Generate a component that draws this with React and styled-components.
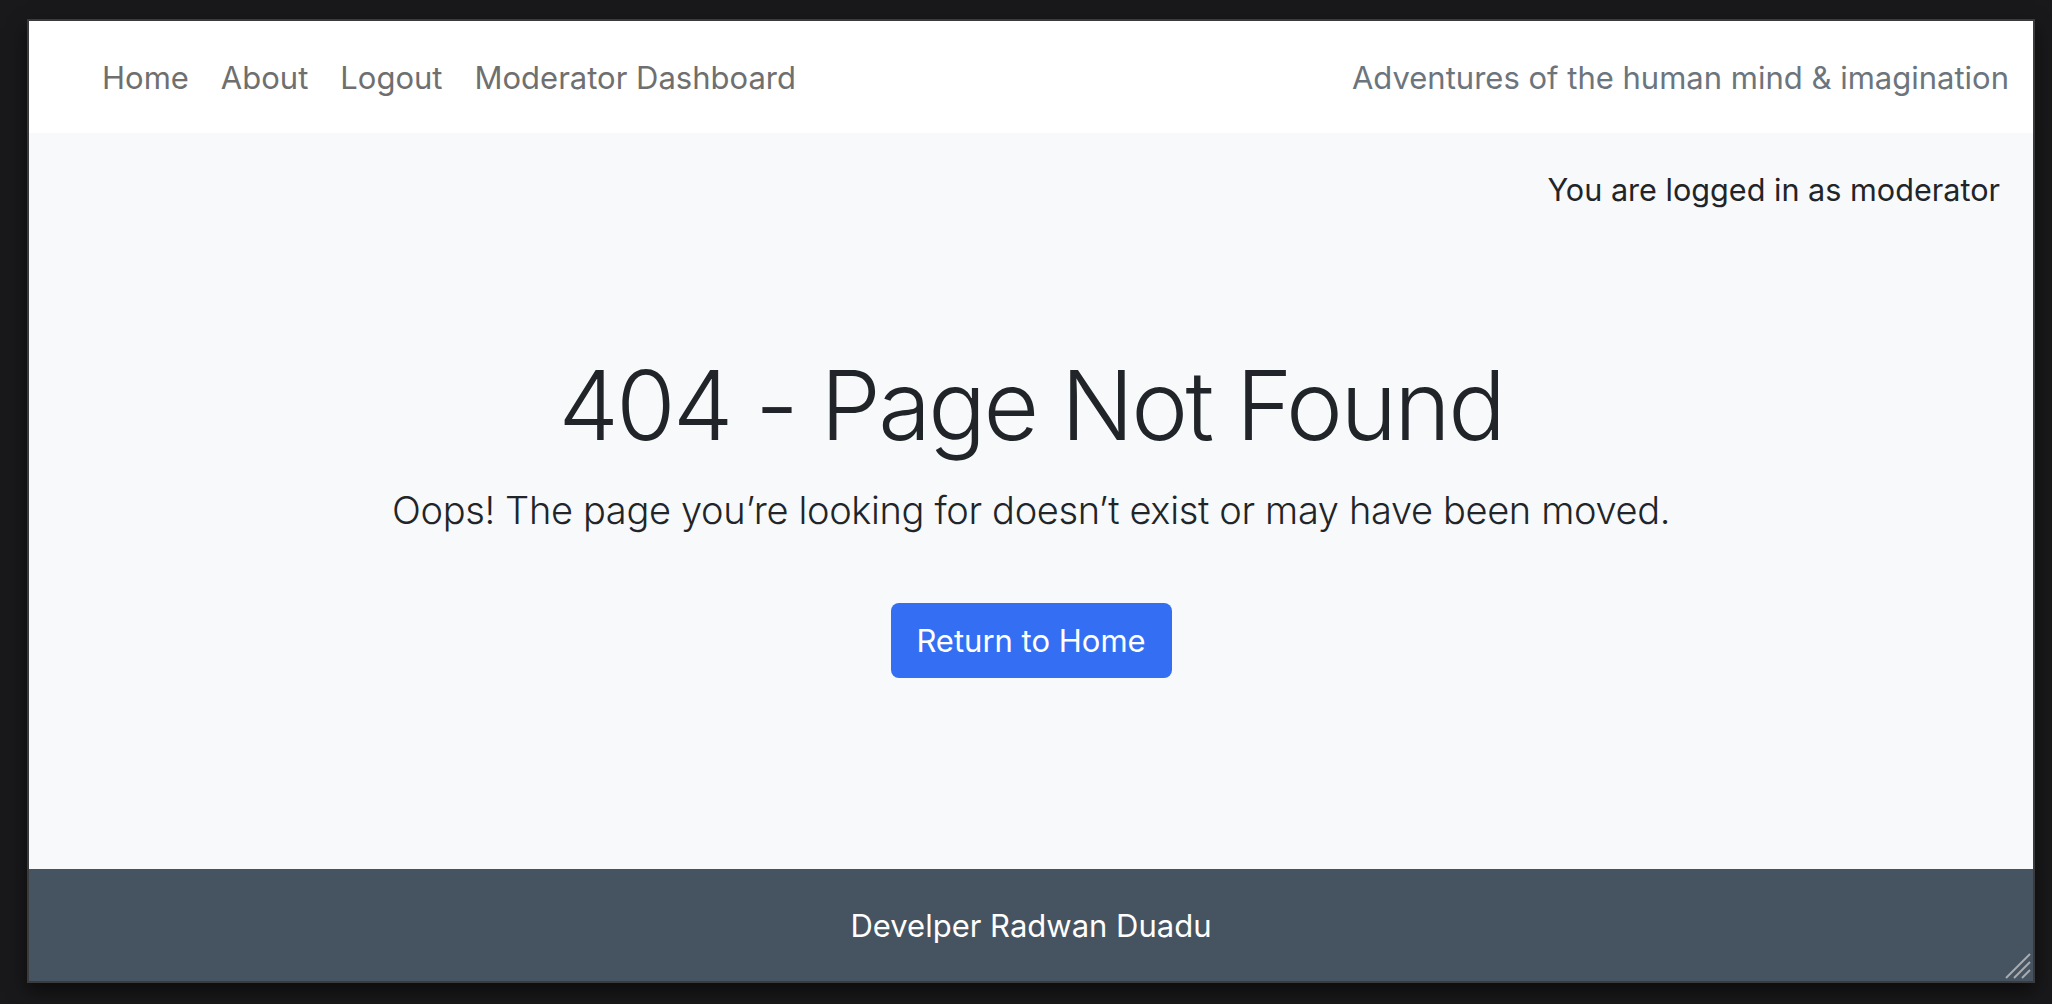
import React from 'react';
import styled, { createGlobalStyle } from 'styled-components';

const GlobalStyle = createGlobalStyle`
  html, body {
    margin: 0;
    padding: 0;
    background: #19191b;
  }
  body {
    font-family: Inter, "Liberation Sans", sans-serif;
  }
  * {
    box-sizing: border-box;
  }
`

const Desktop = styled.div`
  width: 2052px;
  height: 1004px;
  padding: 19px 17px 21px 27px;
  background: #19191b;
`

const Window = styled.div`
  position: relative;
  display: flex;
  flex-direction: column;
  height: 100%;
  border: 2px solid #3b3b3e;
  background: #f8f9fa;
  box-shadow: 0 8px 18px rgba(0, 0, 0, 0.55);
  overflow: hidden;
`

const Navbar = styled.nav`
  display: flex;
  align-items: center;
  justify-content: space-between;
  height: 112px;
  padding: 2px 24px 0 57px;
  background: #ffffff;
`

const NavList = styled.div`
  display: flex;
  align-items: center;
`

const NavLink = styled.a`
  padding: 0 16px;
  font-size: 31px;
  line-height: 44px;
  color: #6f6f6f;
  text-decoration: none;
  cursor: pointer;
`

const Tagline = styled.span`
  font-size: 31px;
  line-height: 44px;
  color: #6c757d;
`

const Main = styled.main`
  flex: 1;
  display: flex;
  flex-direction: column;
`

const LoggedIn = styled.div`
  padding: 33px 33px 0 0;
  text-align: right;
  font-size: 30.6px;
  line-height: 48px;
  color: #212529;
`

const Hero = styled.section`
  display: flex;
  flex-direction: column;
  align-items: center;
  margin-top: 131px;
  text-align: center;
`

const Title = styled.h1`
  margin: 0;
  font-size: 96px;
  font-weight: 300;
  line-height: 120px;
  letter-spacing: -2.6px;
  color: #212529;
`

const Lead = styled.p`
  margin: 15px 0 0;
  font-size: 38px;
  font-weight: 300;
  line-height: 60px;
  letter-spacing: -0.35px;
  color: #212529;
`

const Button = styled.a`
  display: inline-flex;
  align-items: center;
  justify-content: center;
  margin-top: 63px;
  width: 281px;
  height: 75px;
  border-radius: 8px;
  background: #346ff3;
  color: #ffffff;
  font-size: 31px;
  text-decoration: none;
  cursor: pointer;
`

const Footer = styled.footer`
  display: flex;
  align-items: center;
  justify-content: center;
  height: 112px;
  background: #465361;
  color: #ffffff;
  font-size: 31px;
`

const Grip = styled.svg`
  position: absolute;
  right: 2px;
  bottom: 2px;
`

const App = () => {
  return (
    <>
      <GlobalStyle />
      <Desktop>
        <Window>
          <Navbar>
            <NavList>
              <NavLink>Home</NavLink>
              <NavLink>About</NavLink>
              <NavLink>Logout</NavLink>
              <NavLink>Moderator Dashboard</NavLink>
            </NavList>
            <Tagline>Adventures of the human mind &amp; imagination</Tagline>
          </Navbar>
          <Main>
            <LoggedIn>You are logged in as moderator</LoggedIn>
            <Hero>
              <Title>404 - Page Not Found</Title>
              <Lead>Oops! The page you’re looking for doesn’t exist or may have been moved.</Lead>
              <Button>Return to Home</Button>
            </Hero>
          </Main>
          <Footer>Develper Radwan Duadu</Footer>
          <Grip width="26" height="26" viewBox="0 0 26 26">
            <g stroke="#a9adb2" strokeWidth="2">
              <line x1="1" y1="25" x2="25" y2="1" />
              <line x1="9" y1="25" x2="25" y2="9" />
              <line x1="17" y1="25" x2="25" y2="17" />
            </g>
          </Grip>
        </Window>
      </Desktop>
    </>
  )
}

export default App;
